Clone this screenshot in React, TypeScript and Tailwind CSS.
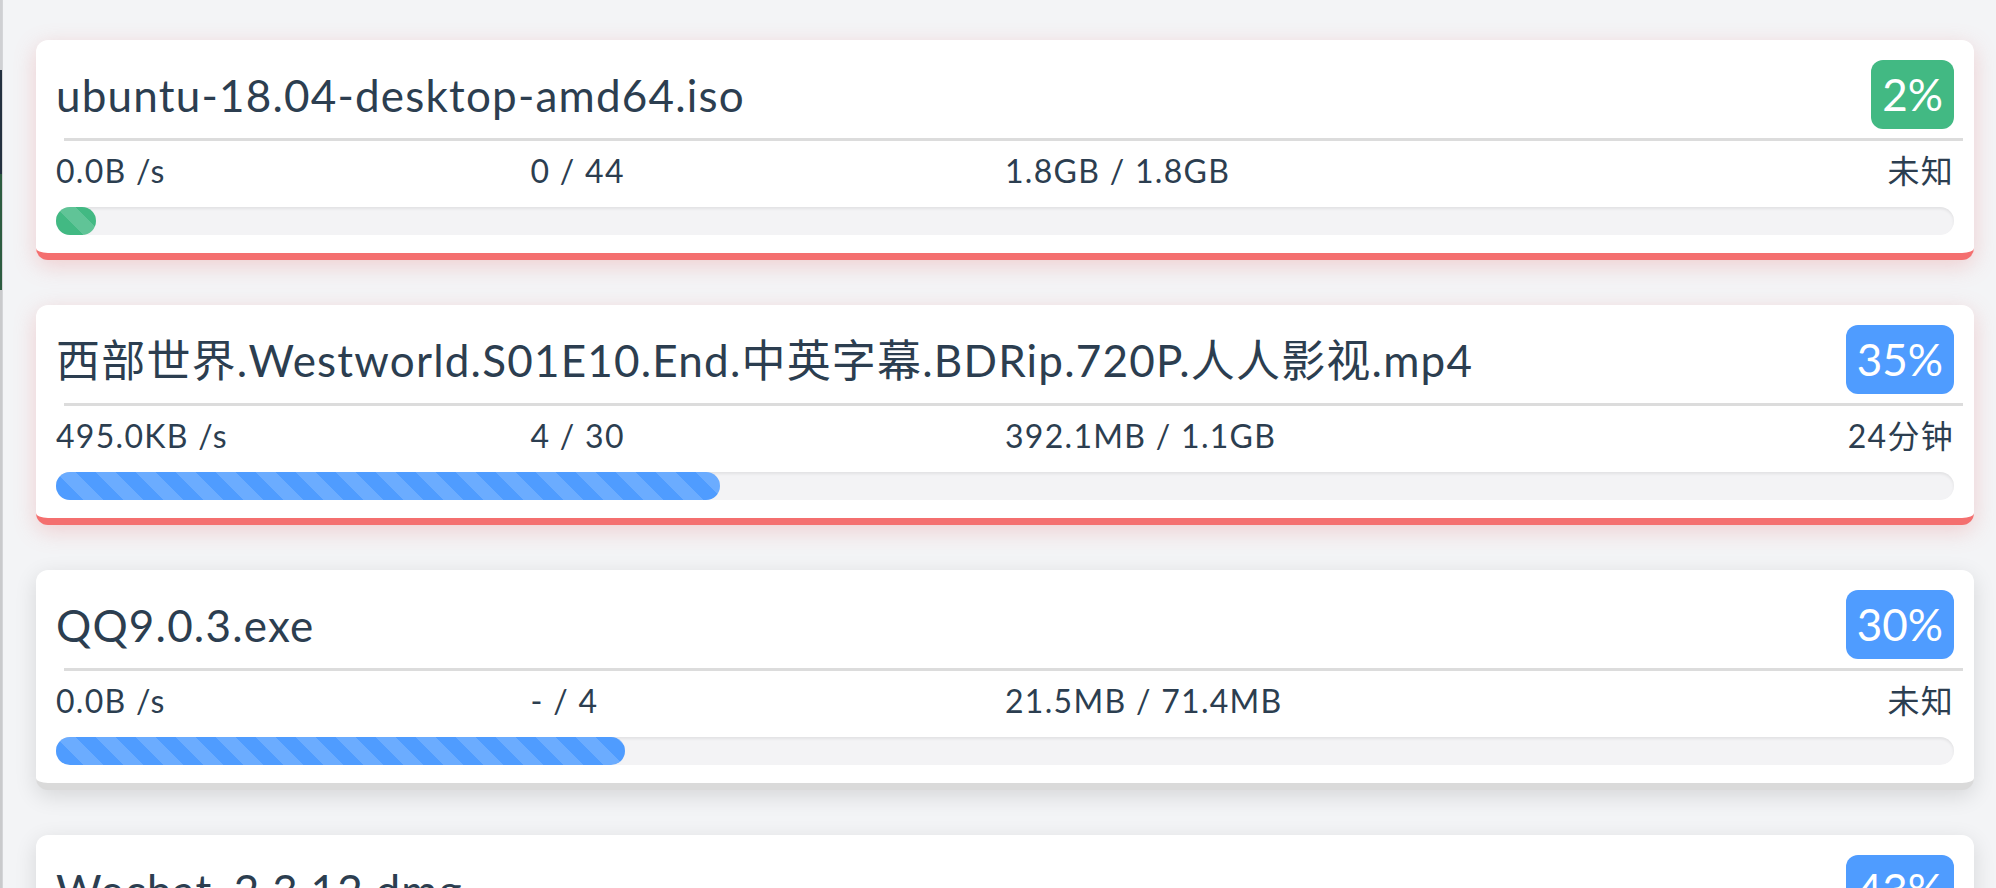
import React from "react";

type Task = {
  name: string;
  speed: string;
  pieces: string;
  size: string;
  eta: string;
  percent: number;
  done?: boolean;
  error?: boolean;
};

const tasks: Task[] = [
  {
    name: "ubuntu-18.04-desktop-amd64.iso",
    speed: "0.0B /s",
    pieces: "0 / 44",
    size: "1.8GB / 1.8GB",
    eta: "未知",
    percent: 2,
    done: true,
    error: true,
  },
  {
    name: "西部世界.Westworld.S01E10.End.中英字幕.BDRip.720P.人人影视.mp4",
    speed: "495.0KB /s",
    pieces: "4 / 30",
    size: "392.1MB / 1.1GB",
    eta: "24分钟",
    percent: 35,
    error: true,
  },
  {
    name: "QQ9.0.3.exe",
    speed: "0.0B /s",
    pieces: "- / 4",
    size: "21.5MB / 71.4MB",
    eta: "未知",
    percent: 30,
  },
  {
    name: "Wechat_2.3.12.dmg",
    speed: "1.2MB /s",
    pieces: "6 / 14",
    size: "11.8MB / 27.5MB",
    eta: "13秒",
    percent: 43,
  },
];

function TaskCard({ task }: { task: Task }) {
  const cardTone = task.error
    ? "border-[#f46f6f] shadow-[0_6px_22px_rgba(230,110,110,0.28)]"
    : "border-[#dadada] shadow-[0_6px_22px_rgba(0,0,0,0.12)]";
  const tone = task.done ? "bg-[#42b983]" : "bg-[#4f9cff]";

  return (
    <div className={`rounded-[12px] bg-white border-b-[7px] px-5 pt-5 pb-[18px] ${cardTone}`}>
      <div className="flex items-center justify-between gap-6">
        <div className="truncate text-[44px] tracking-[1.2px] text-[#2c3e50]">{task.name}</div>
        <span className={`shrink-0 rounded-[12px] px-[11px] py-[8px] text-[44px] leading-[53px] text-white ${tone}`}>
          {task.percent}%
        </span>
      </div>

      <div className="mt-[9px] ml-[8px] mr-[-9px] h-[3px] bg-[#dcdcdc]" />

      <div className="mt-[11px] grid grid-cols-4 text-[32px] leading-[38px] tracking-[1.3px] text-[#2c3e50]">
        <span>{task.speed}</span>
        <span>{task.pieces}</span>
        <span>{task.size}</span>
        <span className="text-right">{task.eta}</span>
      </div>

      <div className="mt-[17px] h-[28px] rounded-full bg-[#f3f3f5] shadow-[inset_0_2px_3px_rgba(0,0,0,0.07)]">
        <div
          className={`h-full min-w-[40px] rounded-full bg-[linear-gradient(45deg,rgba(255,255,255,.16)_25%,transparent_25%,transparent_50%,rgba(255,255,255,.16)_50%,rgba(255,255,255,.16)_75%,transparent_75%,transparent)] bg-[length:40px_40px] ${tone}`}
          style={{ width: `${task.percent}%` }}
        />
      </div>
    </div>
  );
}

export default function App() {
  return (
    <div className="flex h-[888px] overflow-hidden bg-[#f3f4f6] font-['Lato','Noto_Sans_CJK_SC',sans-serif]">
      {/* edge of the neighbouring window */}
      <div className="flex w-[2px] shrink-0 flex-col">
        <div className="h-[70px] bg-[#cfd0d3]" />
        <div className="h-[104px] bg-[#23303f]" />
        <div className="h-[116px] bg-[#2d5c40]" />
        <div className="flex-1 bg-[#c9cacc]" />
      </div>
      <div className="w-px shrink-0 bg-[#d4d5d8]" />

      <div className="flex min-w-0 flex-1 flex-col gap-[45px] pl-[33px] pr-[22px] pt-[40px]">
        {tasks.map((t) => (
          <TaskCard key={t.name} task={t} />
        ))}
      </div>
    </div>
  );
}
